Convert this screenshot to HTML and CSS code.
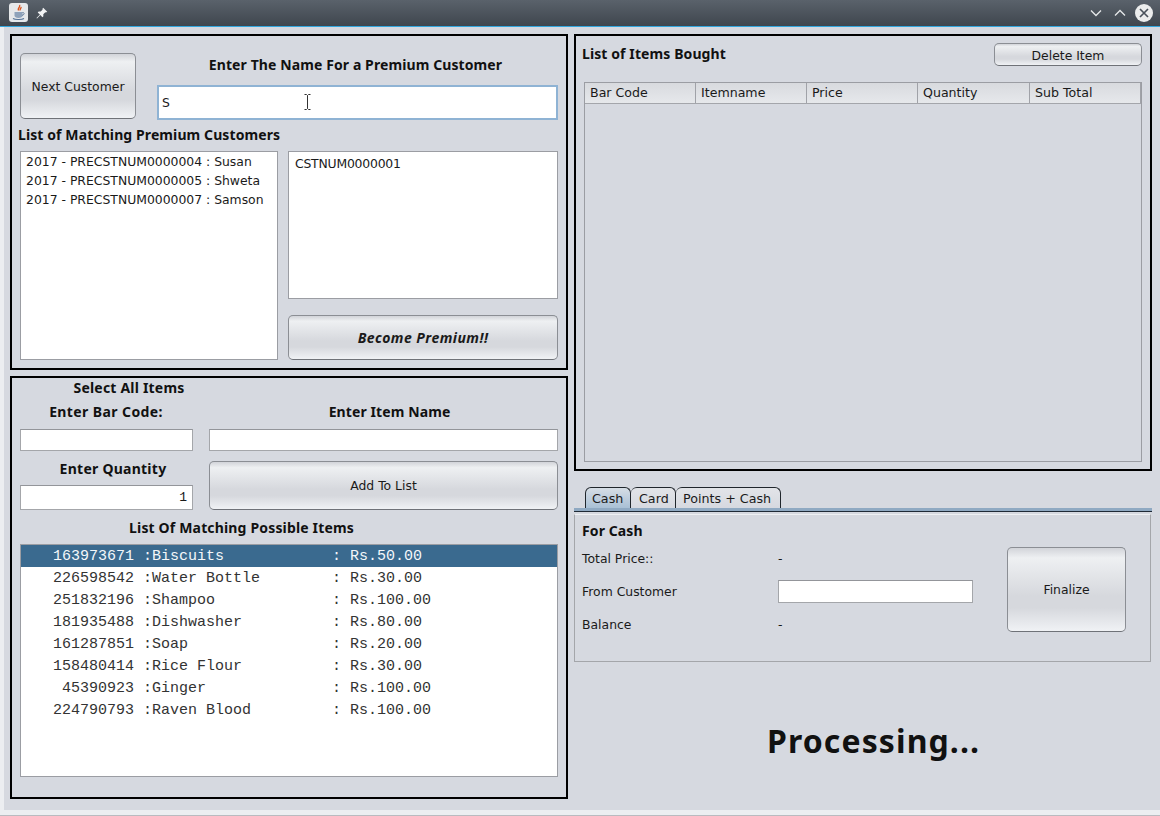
FILE: index.html
```html
<!DOCTYPE html>
<html lang="en">
<head>
<meta charset="utf-8">
<title>Billing</title>
<link rel="stylesheet" href="styles.css">
</head>
<body>
<header class="titlebar">
  <div class="appicon">
    <svg width="18" height="18" viewBox="0 0 18 18">
      <path d="M9.500 1c1.500 2-2.500 3-1 5.500M11 3c.5 1.500-1.500 2-.8 3.500" fill="none" stroke="#d9541e" stroke-width="1.400"/>
      <path d="M4.500 8h8v3.500c0 1.500-1.500 2.500-4 2.500s-4-1-4-2.500z" fill="#8ea2ba"/>
      <path d="M12.500 8.500c2.200-.3 2.200 2.500-.5 2.800" fill="none" stroke="#5f7a9a"/>
      <path d="M3 14.500c2 1.300 9 1.300 11 0" fill="none" stroke="#4f6f95" stroke-width="1.200"/>
    </svg>
  </div>
  <svg class="pin" width="12" height="12" viewBox="0 0 12 12"><path d="M7.200 .8l4 4-1.200.8-.7-.4-2 2 .1 2-1 1-2-2.200L1 11.500 .5 11l3.400-3.500-2.200-2 1-1 2 .1 2-2-.4-.7z" fill="#f2f3f4"/></svg>
  <div class="winbtns">
    <svg width="12" height="8" viewBox="0 0 12 8"><path d="M1 1.500l5 5 5-5" fill="none" stroke="#e6e8ea" stroke-width="1.300"/></svg>
    <svg width="12" height="8" viewBox="0 0 12 8"><path d="M1 6.500l5-5 5 5" fill="none" stroke="#e6e8ea" stroke-width="1.300"/></svg>
    <svg class="close" width="18" height="18" viewBox="0 0 18 18"><circle cx="9" cy="9" r="9" fill="#eceded"/><path d="M5 5l8 8M13 5l-8 8" stroke="#4a525b" stroke-width="1.700"/></svg>
  </div>
</header>

<main class="window">
  <div class="col-left">
    <section class="panel customer">
      <div class="cust-top">
        <button class="btn next">Next Customer</button>
        <div class="cust-search">
          <h2 class="head center name-head">Enter The Name For a Premium Customer</h2>
          <div class="field focus">S<svg class="ibeam" width="7" height="16" viewBox="0 0 7 16"><path d="M.5.500h2l1 1 1-1h2M3.500 1.500v13M.5 15.500h2l1-1 1 1h2" fill="none" stroke="#333"/></svg></div>
        </div>
      </div>
      <h2 class="head match-head">List of Matching Premium Customers</h2>
      <div class="cust-lists">
        <ul class="list names">
          <li>2017 - PRECSTNUM0000004 : Susan</li>
          <li>2017 - PRECSTNUM0000005 : Shweta</li>
          <li>2017 - PRECSTNUM0000007 : Samson</li>
        </ul>
        <div class="cust-right">
          <ul class="list nums"><li>CSTNUM0000001</li></ul>
          <button class="btn premium">Become Premium!!</button>
        </div>
      </div>
    </section>

    <section class="panel items">
      <h2 class="head center select-all">Select All Items</h2>
      <div class="item-form">
        <h2 class="head center bar-head">Enter Bar Code:</h2>
        <h2 class="head center item-head">Enter Item Name</h2>
        <div class="field plain"></div>
        <div class="field plain"></div>
        <div class="qty-col">
          <h2 class="head center qty-head">Enter Quantity</h2>
          <div class="field qty">1</div>
        </div>
        <button class="btn add">Add To List</button>
      </div>
      <h2 class="head center possible">List Of Matching Possible Items</h2>
      <ul class="list mono">
        <li class="sel"><span class="code">163973671</span> :<span class="nm">Biscuits</span>: Rs.50.00</li>
        <li><span class="code">226598542</span> :<span class="nm">Water Bottle</span>: Rs.30.00</li>
        <li><span class="code">251832196</span> :<span class="nm">Shampoo</span>: Rs.100.00</li>
        <li><span class="code">181935488</span> :<span class="nm">Dishwasher</span>: Rs.80.00</li>
        <li><span class="code">161287851</span> :<span class="nm">Soap</span>: Rs.20.00</li>
        <li><span class="code">158480414</span> :<span class="nm">Rice Flour</span>: Rs.30.00</li>
        <li><span class="code">45390923</span> :<span class="nm">Ginger</span>: Rs.100.00</li>
        <li><span class="code">224790793</span> :<span class="nm">Raven Blood</span>: Rs.100.00</li>
      </ul>
    </section>
  </div>

  <div class="col-right">
    <section class="panel bought">
      <div class="bought-top">
        <h2 class="head">List of Items Bought</h2>
        <button class="btn del">Delete Item</button>
      </div>
      <div class="table">
        <div class="thead">
          <div class="th">Bar Code</div>
          <div class="th">Itemname</div>
          <div class="th">Price</div>
          <div class="th">Quantity</div>
          <div class="th">Sub Total</div>
        </div>
      </div>
    </section>

    <div class="tabs">
      <div class="tab active">Cash</div>
      <div class="tab card">Card</div>
      <div class="tab points">Points + Cash</div>
    </div>
    <section class="tabbody">
      <div class="pay">
        <h2 class="head">For Cash</h2>
        <div class="pay-grid">
          <span>Total Price::</span><span>-</span>
          <span>From Customer</span><div class="field plain cash"></div>
          <span>Balance</span><span>-</span>
        </div>
      </div>
      <button class="btn finalize">Finalize</button>
    </section>
    <div class="processing">Processing...</div>
  </div>
</main>
</body>
</html>
```
FILE: styles.css
```css
* { box-sizing: border-box; }
html, body { margin: 0; padding: 0; }
body {
  width: 1160px;
  height: 816px;
  overflow: hidden;
  background: #d6d9e0;
  font-family: "DejaVu Sans", sans-serif;
  font-size: 12.4px;
  color: #1a1a1a;
}
.titlebar {
  height: 27px;
  display: flex;
  align-items: center;
  padding: 0 7px 1px 9px;
  background: linear-gradient(#5a626b, #3f464e);
  border-bottom: 1px solid #33a7de;
}
.appicon {
  width: 19px;
  height: 19px;
  border-radius: 3px;
  background: #e6e8ea;
  display: flex;
  align-items: center;
  justify-content: center;
}
.pin { margin-left: 8px; }
.winbtns {
  margin-left: auto;
  display: flex;
  align-items: center;
  gap: 12px;
}
.close { margin-left: -3px; }

.window {
  height: 785px;
  margin: 0 0 4px 4px;
  padding: 7px 8px 0 6px;
  display: flex;
  gap: 6px;
  background: #d6d9e0;
}
body::before {
  content: "";
  position: absolute;
  left: 0;
  top: 27px;
  width: 4px;
  height: 789px;
  background: #eceef1;
}
body::after {
  content: "";
  position: absolute;
  left: 0;
  bottom: 0;
  width: 1160px;
  height: 5px;
  background: #eceef1;
  border-bottom: 1px solid #b9bbc0;
}
.col-left { width: 558px; display: flex; flex-direction: column; gap: 6px; }
.col-right { width: 578px; display: flex; flex-direction: column; }

.panel { border: 2px solid #000; }
.head {
  margin: 0;
  font-family: "Noto Sans", "DejaVu Sans", sans-serif;
  font-size: 14px;
  line-height: 16px;
  font-weight: 700;
  letter-spacing: .1px;
  color: #111;
}
.center { text-align: center; }

.btn {
  display: block;
  padding: 0;
  font-family: "DejaVu Sans", sans-serif;
  font-size: 12.4px;
  color: #1a1a1a;
  border: 1px solid #8b8e94;
  border-bottom-color: #6f7278;
  border-radius: 5px;
  background: linear-gradient(#d2d4d9 0, #eef0f2 12%, #d6d8dd 58%, #d6d8dd 72%, #f0f2f5 100%);
}
.field {
  background: #fff;
  border: 1px solid #a4a6aa;
  border-top-color: #93959a;
}

/* customer panel */
.customer { height: 336px; padding: 17px 8px 0; }
.cust-top { display: flex; gap: 21px; }
.next { width: 116px; height: 66px; padding-top: 1px; }
.cust-search { width: 401px; }
.name-head { height: 32px; line-height: 24px; padding-right: 4px; }
.focus {
  position: relative;
  height: 35px;
  line-height: 31px;
  padding-left: 3px;
  border: 2px solid #8fb3d4;
}
.ibeam { position: absolute; left: 145px; top: 7px; }
.match-head { margin: 7px 0 8px -2px; }
.cust-lists { display: flex; gap: 10px; }
.list {
  list-style: none;
  margin: 0;
  padding: 0;
  background: #fff;
  border: 1px solid #9b9da3;
}
.names { width: 258px; height: 209px; padding-left: 5px; }
.names li, .nums li { height: 19px; line-height: 19px; }
.cust-right { width: 270px; display: flex; flex-direction: column; gap: 16px; }
.nums { height: 148px; padding-left: 6px; letter-spacing: -.2px; }
.nums li { margin-top: 2px; }
.premium {
  height: 45px;
  font-family: "Noto Sans", "DejaVu Sans", sans-serif;
  font-size: 14px;
  font-weight: 700;
  font-style: italic;
  letter-spacing: .45px;
}

/* items panel */
.items { height: 423px; padding: 2px 8px 0; }
.select-all { width: 218px; letter-spacing: .2px; }
.item-form {
  display: grid;
  grid-template-columns: 173px 349px;
  column-gap: 16px;
  margin-top: 8px;
}
.bar-head { letter-spacing: .4px; padding-right: 1px; }
.item-head { padding-left: 12px; }
.item-form .plain { height: 22px; margin-top: 9px; }
.qty-col { display: flex; flex-direction: column; margin-top: 10px; }
.qty-head { margin-left: 13px; letter-spacing: .25px; }
.qty {
  height: 25px;
  margin-top: 8px;
  line-height: 24px;
  text-align: right;
  padding-right: 5px;
  font-family: "Liberation Mono", monospace;
  font-size: 13px;
}
.add { height: 49px; margin-top: 10px; }
.possible { margin: 10px 0 8px 0; padding-right: 95px; letter-spacing: .16px; }
.mono {
  height: 233px;
  font-family: "Liberation Mono", monospace;
  font-size: 15px;
  color: #333;
}
.mono li { height: 22px; line-height: 24px; white-space: pre; padding-left: 32px; display: flex; }
.mono .code { width: 81px; text-align: right; }
.mono .nm { width: 180px; }
.mono .sel { background: #3a6a8f; color: #f4f7fa; }

/* right */
.bought { height: 437px; padding: 0 8px 0 6px; }
.bought-top {
  display: flex;
  align-items: flex-start;
  justify-content: space-between;
  height: 46px;
}
.bought-top .head { margin-top: 10px; }
.del { width: 148px; height: 23px; margin-top: 7px; padding-top: 1px; }
.table {
  margin-left: 2px;
  height: 380px;
  border: 1px solid #9b9da3;
  background: #d6d9e0;
}
.thead {
  display: grid;
  grid-template-columns: 111px 111px 111px 112px 111px;
  height: 21px;
  border-bottom: 1px solid #a4a6ab;
  background: linear-gradient(#d8dade, #dfe1e5 50%, #e6e8eb);
}
.th {
  padding-left: 5px;
  line-height: 20px;
  border-right: 1px solid #a0a2a8;
  font-size: 12.6px;
}
.tabs {
  display: flex;
  margin-top: 16px;
  height: 25px;
  padding: 0 0 0 11px;
  border-bottom: 1px solid #1f2a36;
  box-shadow: inset 0 -3px 0 0 #8fa9c2;
}
.tab {
  height: 21px;
  line-height: 22px;
  padding: 0 7px;
  font-size: 12.7px;
  border: 1px solid #20262c;
  border-bottom: 0;
  border-left-width: 0;
  border-radius: 6px 6px 0 0;
  background: linear-gradient(#e2e4e8, #d6d9e0);
}
.tab.active {
  width: 46px;
  padding-left: 6px;
  border-left-width: 1px;
  background: linear-gradient(#d6dde5, #a9c0d5);
}
.card { width: 45px; padding-left: 8px; }
.points { width: 105px; padding-left: 7px; }
.tabbody {
  margin-top: 2px;
  width: 577px;
  height: 148px;
  display: flex;
  justify-content: space-between;
  padding: 8px 24px 0 7px;
  border: 1px solid #a4a6aa;
  border-top-color: #eef0f3;
}
.pay { width: 392px; }
.pay-grid {
  display: grid;
  grid-template-columns: 196px 195px;
  grid-auto-rows: 33px;
  align-items: center;
  margin-top: 3px;
}
.cash { height: 23px; }
.finalize { width: 119px; height: 85px; margin-top: 24px; }
.processing {
  margin-top: 59px;
  padding-left: 193px;
  font-family: "Noto Sans", "DejaVu Sans", sans-serif;
  font-weight: 700;
  font-size: 32px;
  line-height: 40px;
  letter-spacing: 1.100px;
  color: #111;
}
```
